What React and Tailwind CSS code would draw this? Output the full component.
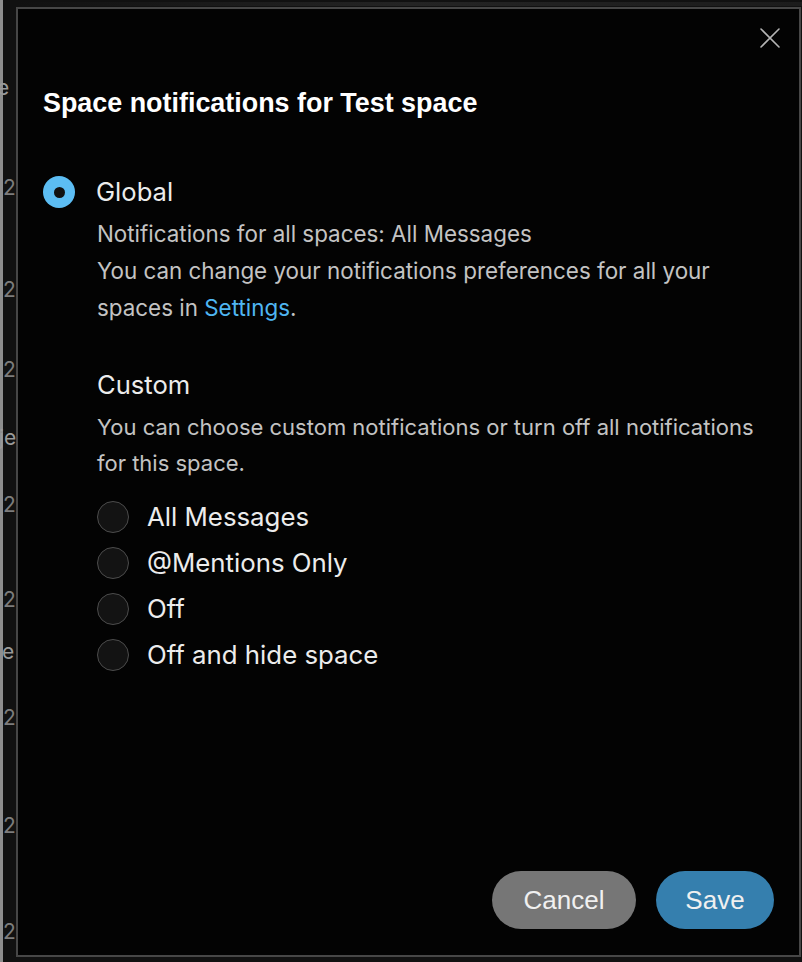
import { useState } from "react";

const sans = "font-['Inter','Noto_Sans',sans-serif]";
const helv = "font-['Liberation_Sans','Arial',sans-serif]";

const options = ["All Messages", "@Mentions Only", "Off", "Off and hide space"];

function CloseIcon() {
  return (
    <svg width="20" height="20" viewBox="0 0 20 20" fill="none" stroke="#b4b4b4" strokeWidth="1.6" strokeLinecap="round">
      <path d="M1 1L19 19M19 1L1 19" />
    </svg>
  );
}

function BackdropStrip() {
  return (
    <div className={`relative flex w-[16px] shrink-0 overflow-hidden ${sans}`}>
      <div className="w-[3px] shrink-0 bg-[#8e8e8e]" />
      <div className="flex w-[13px] flex-col text-[21px] leading-[24px] whitespace-nowrap text-[#7d7d7d]">
        <div className="mt-[76px] -ml-[6px] text-[#9a9a9a]">e</div>
        <div className="mt-[76px] ml-[0px]">2</div>
        <div className="mt-[78px] ml-[0px]">2</div>
        <div className="mt-[56px] ml-[0px]">2</div>
        <div className="mt-[44px] -ml-[4px] text-[#9a9a9a]">je</div>
        <div className="mt-[43px] ml-[0px]">2</div>
        <div className="mt-[71px] ml-[0px]">2</div>
        <div className="mt-[28px] -ml-[1px] text-[#9a9a9a]">e</div>
        <div className="mt-[42px] ml-[0px]">2</div>
        <div className="mt-[84px] ml-[0px]">2</div>
        <div className="mt-[82px] ml-[0px]">2</div>
      </div>
    </div>
  );
}

function SubRadio({ label, checked, onSelect }) {
  return (
    <button type="button" onClick={onSelect} className="flex items-center gap-[18px] text-left">
      <span
        className={`flex h-[32px] w-[32px] items-center justify-center rounded-full border-[1.5px] ${
          checked ? "border-[#5cbdf3] bg-[#5cbdf3]" : "border-[#4c4c4c] bg-[#131313]"
        }`}
      >
        {checked && <span className="h-[11px] w-[11px] rounded-full bg-[#111]" />}
      </span>
      <span className="text-[25.8px] leading-[32px] text-[#ececec]">{label}</span>
    </button>
  );
}

export default function App() {
  const [mode, setMode] = useState("global");

  return (
    <div className="flex h-[962px] w-[802px] overflow-hidden bg-[#111]">
      <BackdropStrip />
      <div className="flex flex-1 flex-col">
        <div className="flex h-[7px] items-start pt-[2px]">
          <div className="h-[4px] flex-1 bg-gradient-to-r from-[#111] via-[#242424] to-[#1c1c1c]" />
        </div>
        <div className={`mr-[1px] mb-[5px] flex flex-1 flex-col border-2 border-[#474747] bg-[#030303] ${sans}`}>
          <div className="flex justify-end pt-[19px] pr-[19px]">
            <button type="button" aria-label="Close">
              <CloseIcon />
            </button>
          </div>

          <div className="pl-[25px]">
            <h1 className={`mt-[41px] text-[26.9px] leading-[28px] font-bold text-white ${helv}`}>
              Space notifications for Test space
            </h1>

            <button type="button" onClick={() => setMode("global")} className="mt-[59px] flex items-center gap-[21px]">
              <span
                className={`flex h-[32px] w-[32px] items-center justify-center rounded-full ${
                  mode === "global" ? "bg-[#5cbdf3]" : "border-[1.5px] border-[#4c4c4c] bg-[#131313]"
                }`}
              >
                {mode === "global" && <span className="h-[11px] w-[11px] rounded-full bg-[#111]" />}
              </span>
              <span className="text-[25.6px] leading-[32px] text-[#ececec]">Global</span>
            </button>

            <div className="mt-[7px] pr-[20px] pl-[54px] text-[22.4px] leading-[37px] text-[#c3c3c3]">
              <p>Notifications for all spaces: All Messages</p>
              <p>
                You can change your notifications preferences for all your spaces in{" "}
                <a href="#" className="text-[#4fb6f2]">
                  Settings
                </a>
                .
              </p>

              <p className="mt-[43px] text-[25.6px] leading-[32px] text-[#ececec]">Custom</p>
              <p className="mt-[8px] text-[22px] leading-[36px]">
                You can choose custom notifications or turn off all notifications for this space.
              </p>

              <div className="mt-[20px] flex flex-col gap-[14px]">
                {options.map((o) => (
                  <SubRadio key={o} label={o} checked={mode === o} onSelect={() => setMode(o)} />
                ))}
              </div>
            </div>
          </div>

          <div className="flex-1" />

          <div className={`flex justify-end gap-[20px] pr-[25px] pb-[26px] ${helv}`}>
            <button type="button" className="h-[58px] w-[144px] rounded-full bg-[#767676] text-[26px] text-[#f0f0f0]">
              Cancel
            </button>
            <button type="button" className="h-[58px] w-[118px] rounded-full bg-[#357fae] text-[26px] text-[#f0f0f0]">
              Save
            </button>
          </div>
        </div>
      </div>
    </div>
  );
}
